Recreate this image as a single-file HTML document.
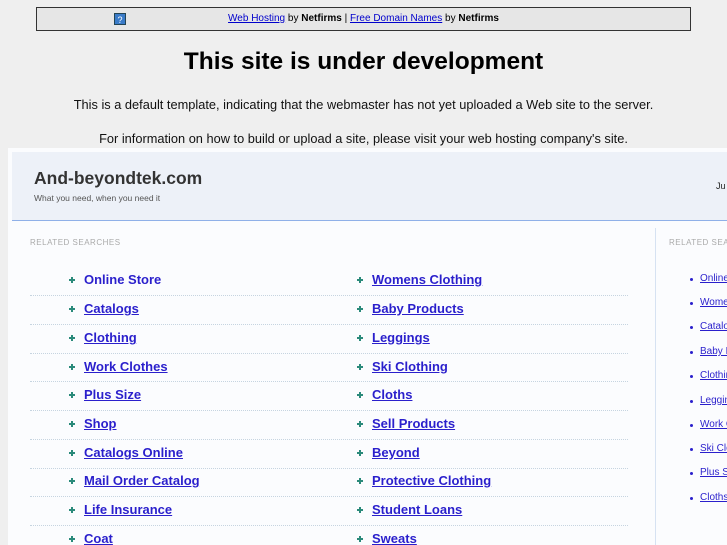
<!DOCTYPE html>
<html><head><meta charset="utf-8"><style>
*{margin:0;padding:0;box-sizing:border-box}
html,body{width:727px;height:545px;overflow:hidden}
body{background:#efefef;font-family:"Liberation Sans",sans-serif;position:relative}
.bar{position:absolute;left:36px;top:7px;width:655px;height:24px;border:1px solid #333;background:#e6e6e6;font-size:10px;text-align:center;line-height:22px;color:#000}
.bar a{color:#00c;text-decoration:underline}
.q{position:absolute;left:77px;top:5px;width:12px;height:12px;background:#3a7bc8;color:#fff;font-size:9px;line-height:12px;text-align:center;border:1px solid #245}
h1{position:absolute;top:48px;width:727px;text-align:center;font-size:24.5px;font-weight:bold}
.p{position:absolute;width:727px;text-align:center;font-size:12.8px;color:#111}
.frame{position:absolute;left:8px;top:148px;width:719px;height:397px;background:#fbfcfe;overflow:hidden}
.hdr{position:absolute;left:4px;top:4px;width:715px;height:69px;background:#edf1f8;border-bottom:1px solid #8fb0e8}
.t{position:absolute;left:22px;top:16px;font-size:17.5px;font-weight:bold;color:#333}
.s{position:absolute;left:22px;top:41px;font-size:8.5px;color:#555}
.ju{position:absolute;left:704px;top:29px;font-size:9px;color:#222}
.rs{position:absolute;font-size:8px;color:#aaa;letter-spacing:.5px;white-space:nowrap}
.div{position:absolute;left:647px;top:80px;width:1px;height:317px;background:#d6e2f2}
.row{position:absolute;left:30px;width:598px;height:29px;border-bottom:1px dotted #c6d4e0}
.it{position:absolute;font-size:13px;font-weight:bold;color:#2a1fcc;text-decoration:underline;white-space:nowrap}
.it::before{content:"";position:absolute;left:-15px;top:7px;width:6px;height:2px;background:#2a8a7a}
.it::after{content:"";position:absolute;left:-13px;top:5px;width:2px;height:6px;background:#2a8a7a}
.sm{position:absolute;left:700px;font-size:10px;color:#2a1fcc;text-decoration:underline;white-space:nowrap}
.sm::before{content:"";position:absolute;left:-10px;top:5px;width:3px;height:3px;border-radius:2px;background:#2a1fcc}
</style></head><body>
<div class="bar"><span class="q">?</span><a>Web Hosting</a> by <b>Netfirms</b> | <a>Free Domain Names</a> by <b>Netfirms</b></div>
<h1>This site is under development</h1>
<div class="p" style="top:97px">This is a default template, indicating that the webmaster has not yet uploaded a Web site to the server.</div>
<div class="p" style="top:131px">For information on how to build or upload a site, please visit your web hosting company's site.</div>
<div class="frame">
<div class="hdr"><div class="t">And-beyondtek.com</div><div class="s">What you need, when you need it</div><div class="ju">Ju</div></div>
<div class="rs" style="left:22px;top:90px">RELATED SEARCHES</div>
<div class="rs" style="left:661px;top:90px">RELATED SEARCHES</div>
<div class="div"></div>
</div>
<div class="row" style="top:267px"></div><div class="row" style="top:296px"></div><div class="row" style="top:325px"></div><div class="row" style="top:353px"></div><div class="row" style="top:382px"></div><div class="row" style="top:411px"></div><div class="row" style="top:440px"></div><div class="row" style="top:468px"></div><div class="row" style="top:497px"></div>
<div class="it" style="left:84px;top:272px;text-decoration:none">Online Store</div><div class="it" style="left:372px;top:272px">Womens Clothing</div>
<div class="it" style="left:84px;top:301px">Catalogs</div><div class="it" style="left:372px;top:301px">Baby Products</div>
<div class="it" style="left:84px;top:330px">Clothing</div><div class="it" style="left:372px;top:330px">Leggings</div>
<div class="it" style="left:84px;top:359px">Work Clothes</div><div class="it" style="left:372px;top:359px">Ski Clothing</div>
<div class="it" style="left:84px;top:387px">Plus Size</div><div class="it" style="left:372px;top:387px">Cloths</div>
<div class="it" style="left:84px;top:416px">Shop</div><div class="it" style="left:372px;top:416px">Sell Products</div>
<div class="it" style="left:84px;top:445px">Catalogs Online</div><div class="it" style="left:372px;top:445px">Beyond</div>
<div class="it" style="left:84px;top:473px">Mail Order Catalog</div><div class="it" style="left:372px;top:473px">Protective Clothing</div>
<div class="it" style="left:84px;top:502px">Life Insurance</div><div class="it" style="left:372px;top:502px">Student Loans</div>
<div class="it" style="left:84px;top:531px">Coat</div><div class="it" style="left:372px;top:531px">Sweats</div>
<div class="sm" style="top:273px">Online Store</div>
<div class="sm" style="top:297px">Womens Clothing</div>
<div class="sm" style="top:321px">Catalogs</div>
<div class="sm" style="top:346px">Baby Products</div>
<div class="sm" style="top:370px">Clothing</div>
<div class="sm" style="top:395px">Leggings</div>
<div class="sm" style="top:419px">Work Clothes</div>
<div class="sm" style="top:443px">Ski Clothing</div>
<div class="sm" style="top:467px">Plus Size</div>
<div class="sm" style="top:492px">Cloths</div>
</body></html>
